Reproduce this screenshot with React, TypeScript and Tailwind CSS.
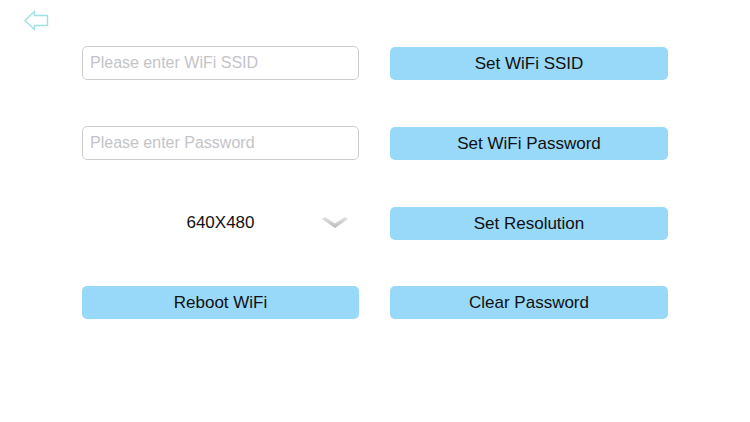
import React from "react";

export default function App() {
  const btn =
    "h-[33px] w-full rounded-[5px] bg-[#98d8f8] text-[17px] text-[#111] flex items-center justify-center";
  const inp =
    "h-[34px] w-full rounded-[5px] border border-[#cdcdcd] px-[7px] text-[16px] outline-none placeholder:text-[#c4c4c8]";
  return (
    <div className="w-[750px] h-[422px] bg-white font-['Liberation_Sans',Arial,sans-serif]">
      <div className="pl-[24px] pt-[10px] h-[46px]">
        <svg width="25" height="21" viewBox="0 0 25 21" fill="none">
          <path
            d="M1 10.5 L10.5 1.5 L10.5 5.5 L23.5 5.5 L23.5 15.5 L10.5 15.5 L10.5 19.5 Z"
            stroke="#9fe0e4"
            strokeWidth="1.4"
            strokeLinejoin="miter"
          />
        </svg>
      </div>
      <div className="ml-[82px] grid grid-cols-[277px_278px] gap-x-[31px] gap-y-[46px]">
        <input className={inp} placeholder="Please enter WiFi SSID" />
        <div className="pt-[1px]">
          <button className={btn}>Set WiFi SSID</button>
        </div>
        <input className={inp} placeholder="Please enter Password" />
        <div className="pt-[1px]">
          <button className={btn}>Set WiFi Password</button>
        </div>
        <div className="relative h-[34px] flex items-center justify-center text-[17px] text-[#111]">
          <span>640X480</span>
          <svg
            className="absolute left-[240px] top-[11px]"
            width="26"
            height="12"
            viewBox="0 0 26 12"
          >
            <defs>
              <linearGradient id="cg" x1="0" y1="0" x2="0" y2="1">
                <stop offset="0" stopColor="#e4e4e4" />
                <stop offset="1" stopColor="#b8b8b8" />
              </linearGradient>
            </defs>
            <path d="M0 2 L3 0 L13 6.5 L23 0 L26 2 L13 11 Z" fill="url(#cg)" />
          </svg>
        </div>
        <div className="pt-[1px]">
          <button className={btn}>Set Resolution</button>
        </div>
        <button className={btn}>Reboot WiFi</button>
        <button className={btn}>Clear Password</button>
      </div>
    </div>
  );
}
